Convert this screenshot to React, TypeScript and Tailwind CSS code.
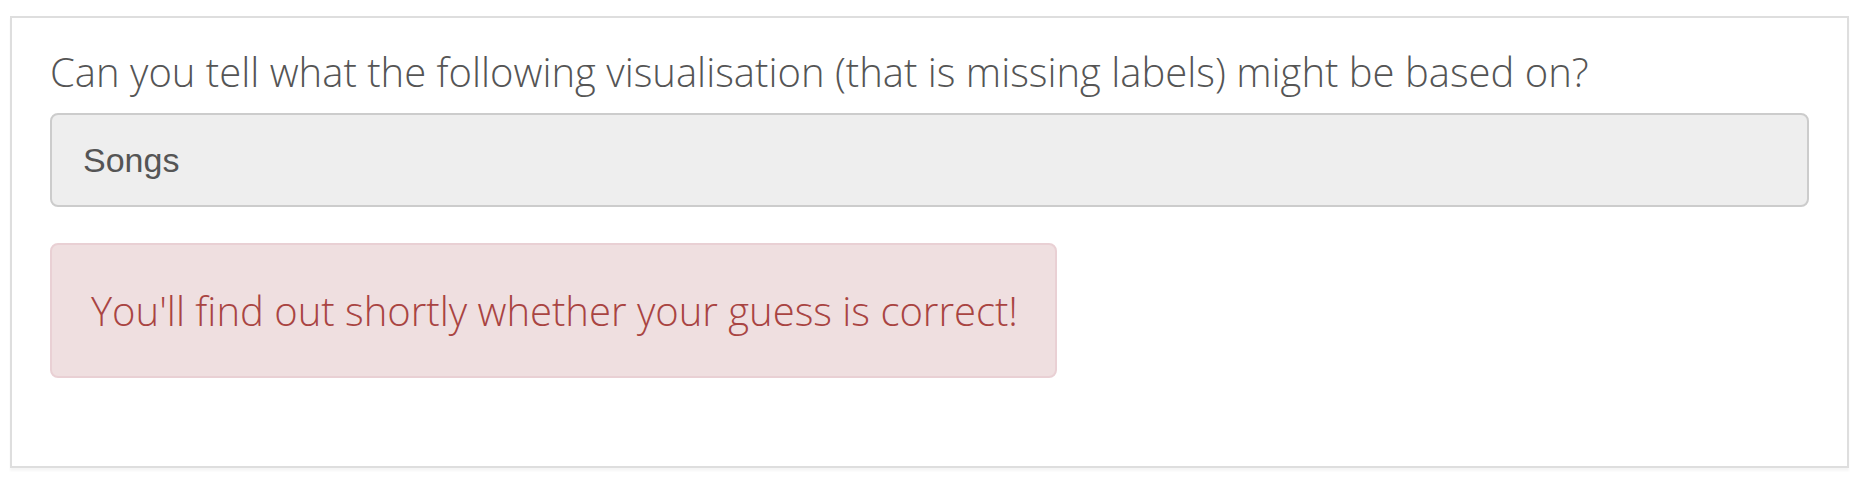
export default function App() {
  return (
    <div className="w-[1862px] h-[492px] bg-white pt-[16px] pl-[10px]">
      <div className="w-[1839px] h-[452px] border-2 border-[#dedede] shadow-[0_3px_2px_rgba(0,0,0,0.04)] px-[38px] pt-[26px] font-['Open_Sans',sans-serif]">
        {/* Question */}
        <h2 className="text-[40px] font-light leading-[56px] text-[#555] tracking-normal">
          Can you tell what the following visualisation (that is missing labels) might be based on?
        </h2>

        {/* Answer field */}
        <div className="mt-[13px] h-[94px] rounded-[8px] border-2 border-[#cccccc] bg-[#eeeeee] flex items-center px-[31px] font-['Liberation_Sans',Arial,sans-serif] text-[34px] text-[#555]">
          Songs
        </div>

        {/* Status */}
        <div className="mt-[36px] w-[1007px] h-[135px] rounded-[8px] border-2 border-[#e9d0d4] bg-[#efdfe0] flex items-center px-[39px] whitespace-nowrap text-[40px] font-light text-[#a94442]">
          You'll find out shortly whether your guess is correct!
        </div>
      </div>
    </div>
  );
}
